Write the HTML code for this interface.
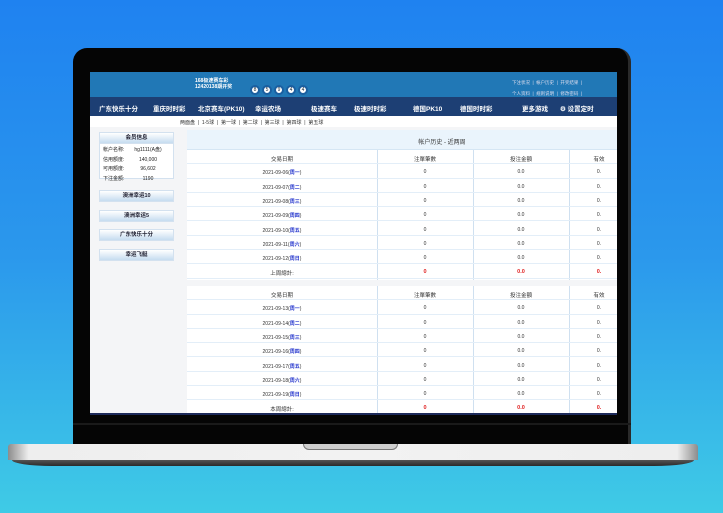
<!DOCTYPE html>
<html><head><meta charset="utf-8"><style>
*{margin:0;padding:0;box-sizing:border-box}
body{width:723px;height:513px;overflow:hidden;position:relative;background:linear-gradient(180deg,#1f82f0 0%,#2b98ec 50%,#3fcbe6 100%);font-family:"Liberation Sans","Noto Sans CJK SC",sans-serif}
.a{position:absolute}
.bezel{left:73px;top:48px;width:558px;height:400px;background:#050505;border-radius:14px 14px 0 0;border-right:3px solid #2a2a2a}
.screen{left:90px;top:72px;width:527px;height:343px;background:#f4f5f7;overflow:hidden}
.hdr{left:0;top:0;width:527px;height:25px;background:#2178b6}
.nav{left:0;top:25px;width:527px;height:19px;background:#1d3f74;color:#fff;font-size:6.5px;font-weight:bold}
.nav span{position:absolute;top:6px}
.sub{left:0;top:44px;width:527px;height:11px;background:#fff;font-size:5px;color:#333}
.side{font-size:5px;color:#222}
.btn{left:9px;width:75px;height:12px;background:linear-gradient(#fff,#c6dcf0);border:1px solid #d3e1ef;font-size:5.5px;font-weight:bold;color:#223;text-align:center;line-height:11px}
.t{left:97px;width:430px;background:#fff;font-size:5px;color:#333}
.r{position:absolute;left:0;width:430px;height:14.3px;border-bottom:1px solid #e3eef8}
.r span{position:absolute;top:5px;text-align:center}
.c1{left:0;width:190px}.c2{left:190px;width:96px}.c3{left:286px;width:96px}.c4{left:382px;width:60px}
.vl{position:absolute;top:0;width:1px;background:#cfe0f0}
.red{color:#e02020;font-weight:bold}
.bl{color:#2233cc}
.ball{display:inline-block;width:10px;height:10px;border-radius:50%;background:#fff;border:2px solid #1a5fa0;margin-right:2px;font-size:5px;line-height:6px;text-align:center;color:#123;vertical-align:middle}
</style></head><body>
<div class="a bezel"></div>
<div class="a screen">
 <div class="a hdr">
  <div class="a" style="left:105px;top:6px;color:#fff;font-size:5px;font-weight:bold;line-height:6px">168极速赛车彩<br>12420138期开奖</div>
  <div class="a" style="left:160px;top:9px"><span class="ball">8</span><span class="ball">5</span><span class="ball">9</span><span class="ball">4</span><span class="ball">4</span></div>
  <div class="a" style="left:422px;top:5px;color:#dde;font-size:4.5px;line-height:11px;white-space:pre">下注状况  |  帐户历史  |  开奖结果  |
个人资料  |  规则说明  |  修改密码  |</div>
 </div>
 <div class="a nav"><span style="left:9px">广东快乐十分</span><span style="left:63px">重庆时时彩</span><span style="left:108px">北京赛车(PK10)</span><span style="left:165px">幸运农场</span><span style="left:221px">极速赛车</span><span style="left:264px">极速时时彩</span><span style="left:323px">德国PK10</span><span style="left:370px">德国时时彩</span><span style="left:432px">更多游戏</span><span style="left:470px">⚙ 设置定时</span></div>
 <div class="a sub"><span class="a" style="left:90px;top:3px;white-space:pre">两面盘  |  1-5球  |  第一球  |  第二球  |  第三球  |  第四球  |  第五球</span></div>
 <div class="a" style="left:9px;top:60px;width:75px;height:47px;background:#fff;border:1px solid #d3e1ef"></div>
 <div class="a btn" style="top:60px">会员信息</div>
 <div class="a side" style="left:13px;top:74px;line-height:9.7px">帐户名称:<br>信用额度:<br>可用额度:<br>下注金额:</div>
 <div class="a side" style="left:43px;top:74px;line-height:9.7px;width:30px;text-align:center">hg1111(A盘)<br>140,000<br>96,602<br>1190</div>
 <div class="a btn" style="top:118px">澳洲幸运10</div>
 <div class="a btn" style="top:138px">澳洲幸运5</div>
 <div class="a btn" style="top:157px">广东快乐十分</div>
 <div class="a btn" style="top:177px">幸运飞艇</div>
 <div class="a t" style="top:58px;height:150px">
  <div class="a" style="left:0;top:0;width:430px;height:20px;background:#eaf4fc;border-bottom:1px solid #d5e6f4;text-align:center;font-size:6px;padding-top:7px;padding-left:80px">帐户历史 - 近两周</div>
  <div class="vl" style="left:190px;top:20px;height:130px"></div><div class="vl" style="left:286px;top:20px;height:130px"></div><div class="vl" style="left:382px;top:20px;height:130px"></div>
  <div class="r" style="top:20px;font-size:5.5px"><span class="c1">交易日期</span><span class="c2">注單筆數</span><span class="c3">投注金額</span><span class="c4">有效</span></div>
  <div class="r" style="top:34.3px"><span class="c1">2021-09-06(<b class="bl">周一</b>)</span><span class="c2">0</span><span class="c3">0.0</span><span class="c4">0.</span></div>
  <div class="r" style="top:48.6px"><span class="c1">2021-09-07(<b class="bl">周二</b>)</span><span class="c2">0</span><span class="c3">0.0</span><span class="c4">0.</span></div>
  <div class="r" style="top:62.9px"><span class="c1">2021-09-08(<b class="bl">周三</b>)</span><span class="c2">0</span><span class="c3">0.0</span><span class="c4">0.</span></div>
  <div class="r" style="top:77.2px"><span class="c1">2021-09-09(<b class="bl">周四</b>)</span><span class="c2">0</span><span class="c3">0.0</span><span class="c4">0.</span></div>
  <div class="r" style="top:91.5px"><span class="c1">2021-09-10(<b class="bl">周五</b>)</span><span class="c2">0</span><span class="c3">0.0</span><span class="c4">0.</span></div>
  <div class="r" style="top:105.8px"><span class="c1">2021-09-11(<b class="bl">周六</b>)</span><span class="c2">0</span><span class="c3">0.0</span><span class="c4">0.</span></div>
  <div class="r" style="top:120.1px"><span class="c1">2021-09-12(<b class="bl">周日</b>)</span><span class="c2">0</span><span class="c3">0.0</span><span class="c4">0.</span></div>
  <div class="r" style="top:134.4px;font-size:5.5px"><span class="c1">上周總計:</span><span class="c2 red">0</span><span class="c3 red">0.0</span><span class="c4 red">0.</span></div>
 </div>
 <div class="a t" style="top:214px;height:130px">
  <div class="vl" style="left:190px;top:0;height:130px"></div><div class="vl" style="left:286px;top:0;height:130px"></div><div class="vl" style="left:382px;top:0;height:130px"></div>
  <div class="r" style="top:0;font-size:5.5px"><span class="c1">交易日期</span><span class="c2">注單筆數</span><span class="c3">投注金額</span><span class="c4">有效</span></div>
  <div class="r" style="top:14.3px"><span class="c1">2021-09-13(<b class="bl">周一</b>)</span><span class="c2">0</span><span class="c3">0.0</span><span class="c4">0.</span></div>
  <div class="r" style="top:28.6px"><span class="c1">2021-09-14(<b class="bl">周二</b>)</span><span class="c2">0</span><span class="c3">0.0</span><span class="c4">0.</span></div>
  <div class="r" style="top:42.9px"><span class="c1">2021-09-15(<b class="bl">周三</b>)</span><span class="c2">0</span><span class="c3">0.0</span><span class="c4">0.</span></div>
  <div class="r" style="top:57.2px"><span class="c1">2021-09-16(<b class="bl">周四</b>)</span><span class="c2">0</span><span class="c3">0.0</span><span class="c4">0.</span></div>
  <div class="r" style="top:71.5px"><span class="c1">2021-09-17(<b class="bl">周五</b>)</span><span class="c2">0</span><span class="c3">0.0</span><span class="c4">0.</span></div>
  <div class="r" style="top:85.8px"><span class="c1">2021-09-18(<b class="bl">周六</b>)</span><span class="c2">0</span><span class="c3">0.0</span><span class="c4">0.</span></div>
  <div class="r" style="top:100.1px"><span class="c1">2021-09-19(<b class="bl">周日</b>)</span><span class="c2">0</span><span class="c3">0.0</span><span class="c4">0.</span></div>
  <div class="r" style="top:114.4px;font-size:5.5px"><span class="c1">本周總計:</span><span class="c2 red">0</span><span class="c3 red">0.0</span><span class="c4 red">0.</span></div>
 </div>
 <div class="a" style="left:0;top:341px;width:527px;height:2px;background:#1d2a5a"></div>
</div>
<div class="a" style="left:73px;top:423px;width:558px;height:2px;background:#1a1a1a"></div>
<div class="a" style="left:8px;top:444px;width:690px;height:16px;background:linear-gradient(90deg,#8c8c8c 0%,#eee 3%,#f2f2f2 50%,#eee 97%,#8c8c8c 100%);border-radius:3px 3px 0 0"></div>
<div class="a" style="left:12px;top:460px;width:682px;height:6px;background:linear-gradient(#555,#2a2a2a);border-radius:0 0 40px 40px/0 0 6px 6px"></div>
<div class="a" style="left:303px;top:444px;width:95px;height:6px;background:#cfcfcf;border-radius:0 0 8px 8px;border:1px solid #777;border-top:none"></div>
</body></html>
